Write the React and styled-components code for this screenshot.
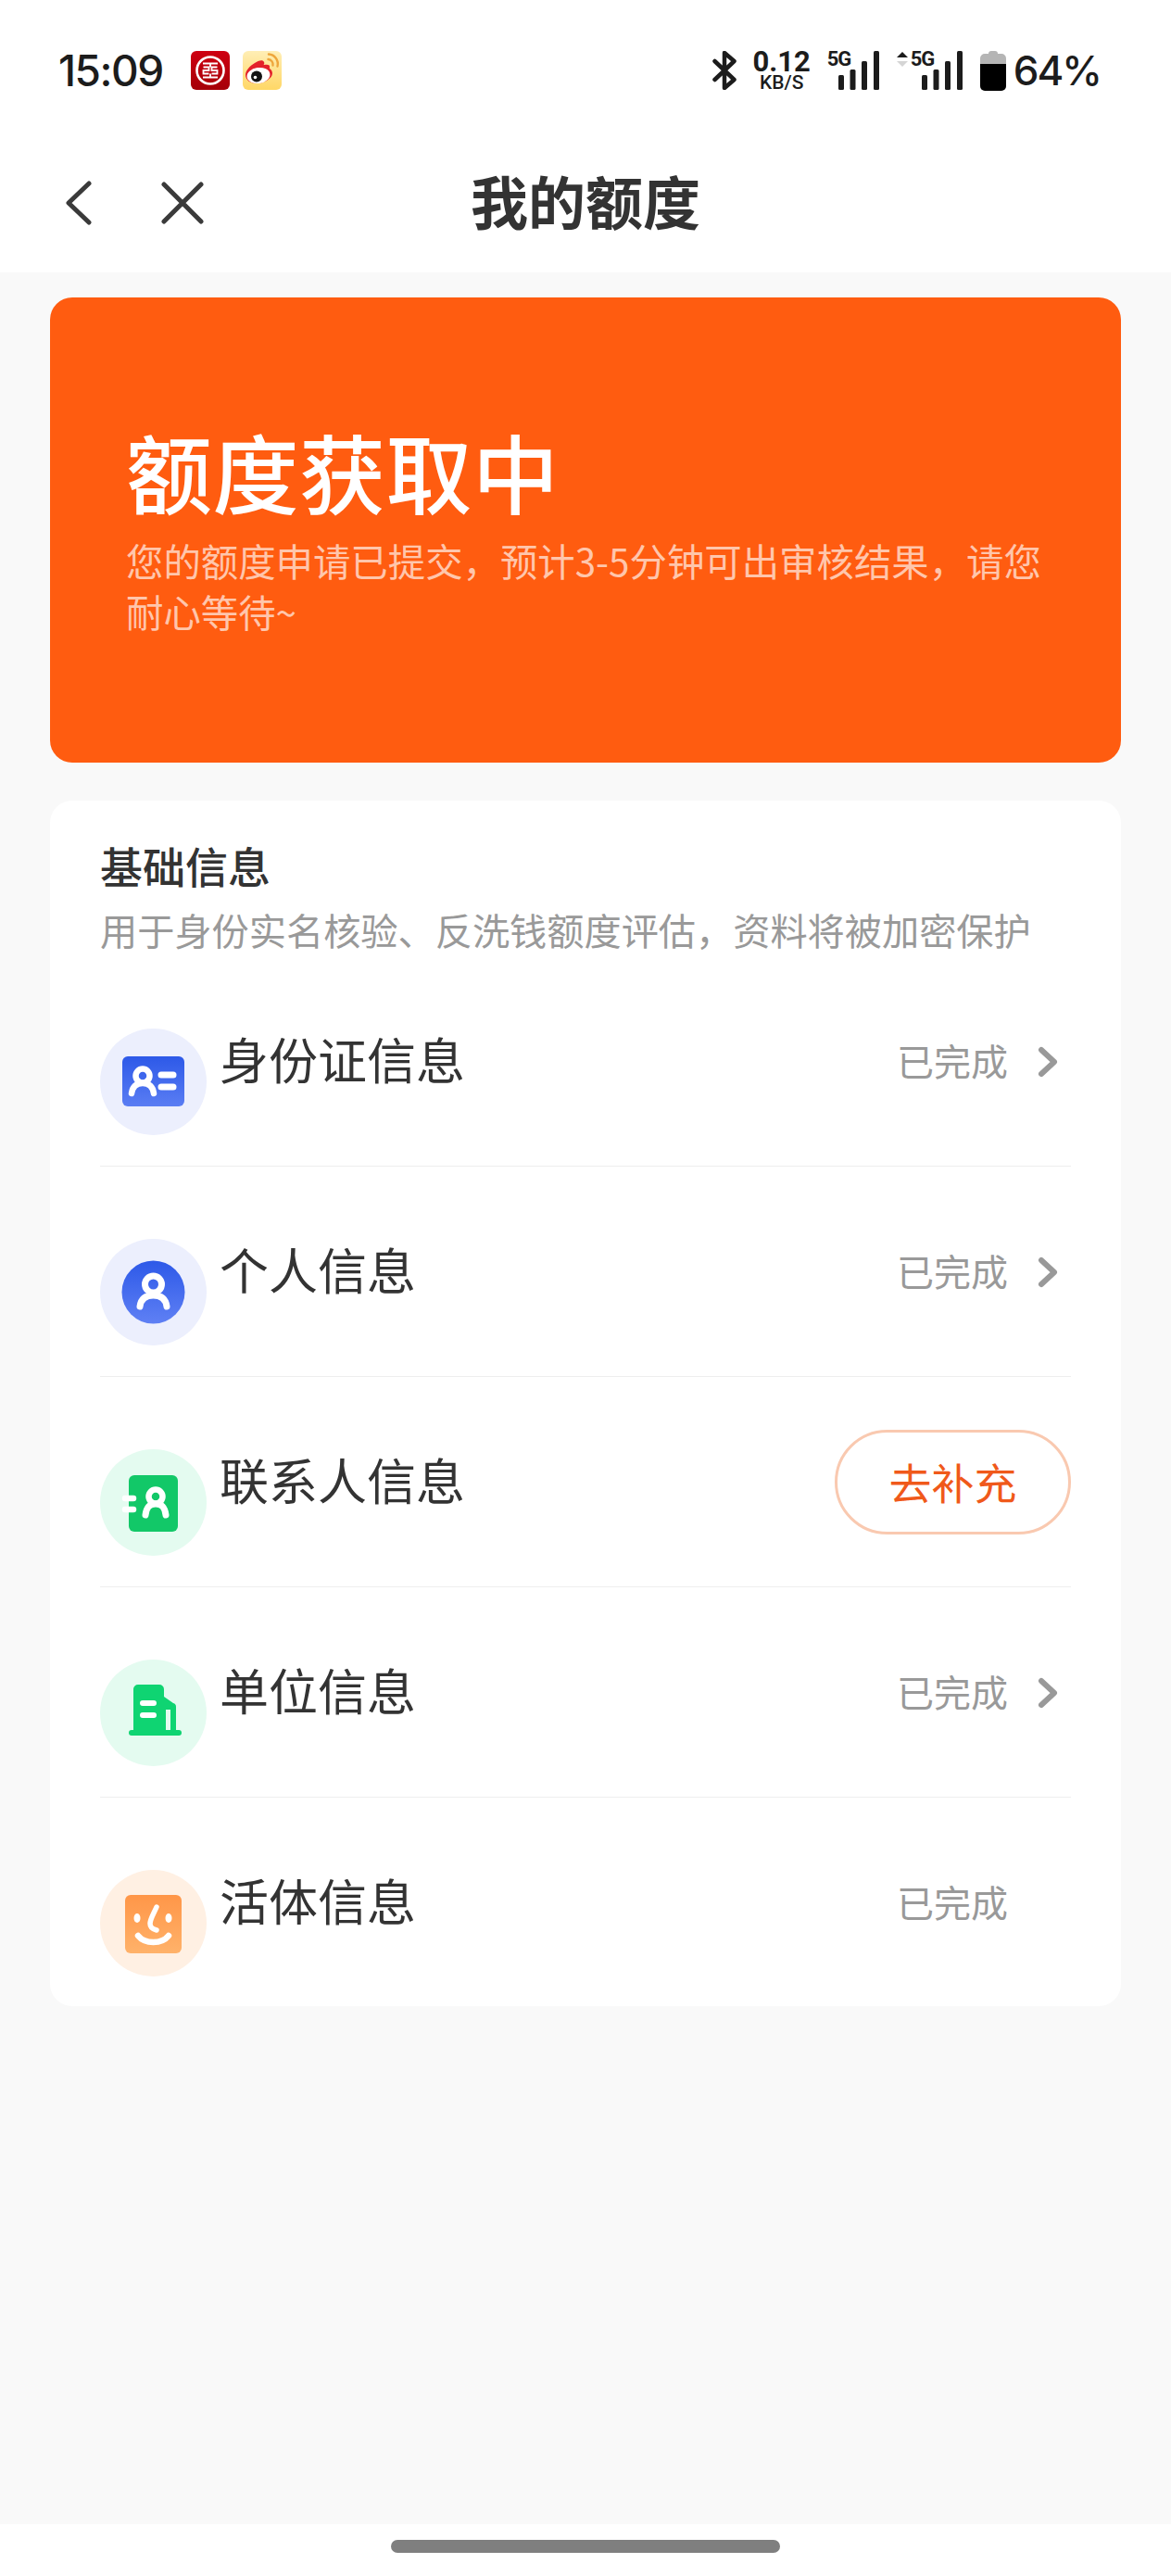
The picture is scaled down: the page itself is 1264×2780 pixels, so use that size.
import React from 'react';
import styled, { createGlobalStyle } from 'styled-components';

const GlobalStyle = createGlobalStyle`
  html, body {
    margin: 0;
    padding: 0;
    background: #fff;
  }
  * {
    box-sizing: border-box;
  }
`;

const cjk = `"Noto Sans CJK SC", "Noto Sans", sans-serif`;

const Page = styled.div`
  width: 1264px;
  height: 2780px;
  display: flex;
  flex-direction: column;
  background: #f9f9f9;
  font-family: ${cjk};
  overflow: hidden;
`;

const StatusBar = styled.div`
  height: 152px;
  flex: none;
  display: flex;
  align-items: center;
  justify-content: space-between;
  padding: 0 76px 0 63px;
  background: #fff;
  color: #1c1c1c;
`;

const StatusGroup = styled.div`
  display: flex;
  align-items: center;
  gap: ${p => p.$gap}px;
`;

const StatusText = styled.span`
  font-family: Inter, Roboto, sans-serif;
  font-size: 46px;
  font-weight: 500;
  line-height: 46px;
  letter-spacing: -1.5px;
`;

const Clock = styled(StatusText)`
  margin-right: 16px;
`;

const Percent = styled(StatusText)`
  margin-left: -11px;
  font-size: 44px;
  letter-spacing: -2px;
`;

const NetSpeed = styled.div`
  width: 60px;
  display: flex;
  flex-direction: column;
  align-items: center;
  font-family: Roboto, sans-serif;
`;

const SpeedValue = styled.span`
  font-size: 31px;
  font-weight: 700;
  line-height: 26px;
`;

const SpeedUnit = styled.span`
  font-size: 21px;
  font-weight: 500;
  line-height: 18px;
`;

const Signal = styled.div`
  position: relative;
  width: ${p => p.$width}px;
  height: 42px;
  display: flex;
  justify-content: flex-end;
`;

const NetworkTag = styled.span`
  position: absolute;
  right: 29px;
  top: -1px;
  width: 27px;
  font-family: "Liberation Sans Narrow", Roboto, sans-serif;
  font-size: 22px;
  font-weight: 700;
  line-height: 20px;
  letter-spacing: -1px;
  white-space: nowrap;
`;

const NavBar = styled.div`
  height: 142px;
  flex: none;
  position: relative;
  display: flex;
  align-items: center;
  justify-content: center;
  background: #fff;
`;

const NavButtons = styled.div`
  position: absolute;
  left: 70px;
  top: 43px;
  display: flex;
  gap: 74px;
  align-items: center;
`;

const NavTitle = styled.h1`
  margin: 0 0 14px;
  font-size: 62px;
  line-height: 80px;
  font-weight: 700;
  color: #333;
`;

const Main = styled.main`
  flex: 1;
  padding: 27px 54px 0;
`;

const Hero = styled.section`
  height: 502px;
  padding: 127px 82px 0;
  border-radius: 24px;
  background: #ff5c10;
  color: #fff;
`;

const HeroTitle = styled.h2`
  margin: 0 0 9px;
  font-size: 93px;
  line-height: 120px;
  font-weight: 500;
  letter-spacing: 0.5px;
`;

const HeroText = styled.p`
  margin: 0;
  font-size: 40.4px;
  line-height: 55px;
  color: rgba(255, 255, 255, 0.66);
`;

const Card = styled.section`
  margin-top: 41px;
  height: 1301px;
  padding: 0 54px;
  border-radius: 24px;
  background: #fff;
`;

const CardHead = styled.header`
  height: 168px;
  padding-top: 39px;
`;

const CardTitle = styled.h3`
  margin: 0;
  font-size: 46px;
  line-height: 60px;
  font-weight: 500;
  color: #333;
`;

const CardText = styled.p`
  margin: 12px 0 0;
  font-size: 40.2px;
  line-height: 56px;
  color: #999;
  white-space: nowrap;
`;

const Row = styled.div`
  height: 227px;
  padding-top: 57px;
  display: flex;
  align-items: flex-start;
  border-bottom: ${p => (p.$last ? 'none' : '1px solid #eeeeee')};
`;

const Badge = styled.svg`
  width: 115px;
  height: 115px;
  margin-top: 21px;
  flex: none;
`;

const Label = styled.span`
  flex: 1;
  margin: -3px 0 0 14px;
  font-size: 53px;
  line-height: 113px;
  color: #333;
`;

const Done = styled.span`
  margin-top: -1px;
  font-size: 40px;
  line-height: 113px;
  color: #999;
`;

const ChevronSlot = styled.span`
  width: 68px;
  height: 113px;
  padding-right: 13px;
  display: flex;
  align-items: center;
  justify-content: flex-end;
`;

const FillButton = styled.button`
  width: 255px;
  height: 113px;
  padding: 0 0 4px;
  border: 3px solid #f9c9b0;
  border-radius: 57px;
  background: #fff;
  font-family: ${cjk};
  font-size: 46px;
  color: #f0591a;
`;

const HomeArea = styled.div`
  height: 56px;
  flex: none;
  padding-top: 17px;
  display: flex;
  justify-content: center;
  background: #fff;
`;

const HomeBar = styled.div`
  width: 420px;
  height: 14px;
  border-radius: 7px;
  background: #7f7f7f;
`;

const Icbc = () => (
  <svg width="42" height="42" viewBox="0 0 42 42">
    <defs>
      <linearGradient id="icbc" x1="0" y1="0" x2="0" y2="1">
        <stop offset="0" stopColor="#cf0011" />
        <stop offset="1" stopColor="#a50008" />
      </linearGradient>
    </defs>
    <rect width="42" height="42" rx="6" fill="url(#icbc)" />
    <circle cx="21" cy="21" r="14.5" fill="none" stroke="#fff" strokeWidth="2.6" />
    <path
      d="M13 13.500h16M13 28.500h16M21 13.500v4M21 24.500v4M13.500 17.500h6v3.500h-6v3.500h6M28.500 17.500h-6v3.500h6v3.500h-6"
      fill="none"
      stroke="#fff"
      strokeWidth="1.800"
    />
  </svg>
);

const Weibo = () => (
  <svg width="42" height="42" viewBox="0 0 42 42">
    <defs>
      <linearGradient id="weibo" x1="0" y1="0" x2="0" y2="1">
        <stop offset="0" stopColor="#ffeeb5" />
        <stop offset="1" stopColor="#ffd766" />
      </linearGradient>
    </defs>
    <rect width="42" height="42" rx="6" fill="url(#weibo)" />
    <path d="M28 3.500a10.500 10.500 0 0 1 9.500 13" fill="none" stroke="#eea63c" strokeWidth="2.400" strokeLinecap="round" />
    <path d="M27.500 9a5.500 5.500 0 0 1 5 6.500" fill="none" stroke="#eea63c" strokeWidth="2.400" strokeLinecap="round" />
    <path
      d="M3 26c0-5 5-10 10-13 4-3 9-4 10-1 1 2-1 3 0 3 4-1 7 0 6 3-1 1 3 2 3 6 0 6-9 11-17 11-7 0-12-4-12-9z"
      fill="#e3212b"
    />
    <ellipse cx="17" cy="26.500" rx="12.500" ry="8.500" transform="rotate(-8 17 26.500)" fill="#fff" />
    <circle cx="15" cy="27.500" r="6" fill="#141414" />
    <circle cx="13.500" cy="28.500" r="1.800" fill="#fff" />
  </svg>
);

const Bluetooth = () => (
  <svg width="26" height="42" viewBox="0 0 26 42">
    <path
      d="M2.500 11l21 20-10.500 9V2l10.500 9-21 20"
      fill="none"
      stroke="#1c1c1c"
      strokeWidth="4.500"
      strokeLinejoin="round"
      strokeLinecap="round"
    />
  </svg>
);

const Bars = () => (
  <svg width="44" height="42" viewBox="0 0 44 42">
    <rect x="0" y="26" width="6" height="16" rx="1.500" fill="#1c1c1c" />
    <rect x="12.500" y="20" width="6" height="22" rx="1.500" fill="#1c1c1c" />
    <rect x="25" y="11" width="6" height="31" rx="1.500" fill="#1c1c1c" />
    <rect x="38" y="0" width="6" height="42" rx="1.500" fill="#1c1c1c" />
  </svg>
);

const DataArrows = styled.svg`
  position: absolute;
  left: 0;
  top: 0;
`;

const Battery = () => (
  <svg width="28" height="44" viewBox="0 0 28 44">
    <path d="M0 9a5 5 0 0 1 5-5h4a3 3 0 0 1 3-3h4a3 3 0 0 1 3 3h4a5 5 0 0 1 5 5v6H0z" fill="#b5b5b5" />
    <path d="M0 15h28v24a5 5 0 0 1-5 5H5a5 5 0 0 1-5-5z" fill="#000" />
  </svg>
);

const BackIcon = () => (
  <svg width="30" height="48" viewBox="0 0 30 48">
    <path d="M26 3L4 24l22 21" fill="none" stroke="#3a3a3a" strokeWidth="5" strokeLinecap="round" strokeLinejoin="round" />
  </svg>
);

const CloseIcon = () => (
  <svg width="46" height="46" viewBox="0 0 46 46">
    <path d="M3 3l40 40M43 3L3 43" fill="none" stroke="#3a3a3a" strokeWidth="5" strokeLinecap="round" />
  </svg>
);

const Chevron = () => (
  <svg width="24" height="34" viewBox="0 0 24 34">
    <path d="M5 4l14 13L5 30" fill="none" stroke="#999" strokeWidth="6" strokeLinecap="round" strokeLinejoin="round" />
  </svg>
);

const IdBadge = () => (
  <Badge viewBox="0 0 115 115">
    <defs>
      <linearGradient id="blueA" x1="0" y1="0" x2="0" y2="1">
        <stop offset="0" stopColor="#2d59e8" />
        <stop offset="1" stopColor="#5a7df3" />
      </linearGradient>
    </defs>
    <circle cx="57.5" cy="57.5" r="57.5" fill="#eceffd" />
    <rect x="24" y="30" width="67" height="54" rx="6" fill="url(#blueA)" />
    <circle cx="46" cy="51" r="7.500" fill="none" stroke="#fff" strokeWidth="6.500" />
    <path d="M34 70c1-7 5-11 12-11s11 4 12 11" fill="none" stroke="#fff" strokeWidth="6.500" strokeLinecap="round" />
    <path d="M66 50h13M66 63h13" fill="none" stroke="#fff" strokeWidth="7" strokeLinecap="round" />
  </Badge>
);

const PersonBadge = () => (
  <Badge viewBox="0 0 115 115">
    <defs>
      <linearGradient id="blueB" x1="0" y1="0" x2="0" y2="1">
        <stop offset="0" stopColor="#2d59e8" />
        <stop offset="1" stopColor="#5f80f4" />
      </linearGradient>
    </defs>
    <circle cx="57.5" cy="57.5" r="57.5" fill="#eceffd" />
    <circle cx="57.5" cy="57.500" r="34" fill="url(#blueB)" />
    <circle cx="57.5" cy="49" r="9" fill="none" stroke="#fff" strokeWidth="7" />
    <path d="M43 73c1-8 6-12 14.500-12S71 65 72 73" fill="none" stroke="#fff" strokeWidth="7" strokeLinecap="round" />
  </Badge>
);

const ContactBadge = () => (
  <Badge viewBox="0 0 115 115">
    <circle cx="57.5" cy="57.5" r="57.5" fill="#e4fbf0" />
    <rect x="31" y="28" width="53" height="61" rx="6" fill="#12c868" />
    <path d="M27 53h9M27 65h9" fill="none" stroke="#fff" strokeWidth="6.500" strokeLinecap="round" />
    <circle cx="60" cy="51" r="7.500" fill="none" stroke="#fff" strokeWidth="6.500" />
    <path d="M49 71c1-8 4-12 11-12s10 4 11 12" fill="none" stroke="#fff" strokeWidth="7" strokeLinecap="round" />
  </Badge>
);

const CompanyBadge = () => (
  <Badge viewBox="0 0 115 115">
    <circle cx="57.5" cy="57.5" r="57.5" fill="#e4fbf0" />
    <path d="M36 32a5 5 0 0 1 5-5h23a5 5 0 0 1 5 5v8l10 7a4 4 0 0 1 3 4v27H36z" fill="#0fd472" />
    <rect x="31" y="76" width="57" height="6" rx="3" fill="#0fd472" />
    <path d="M46 47h12M46 60h12" fill="none" stroke="#fff" strokeWidth="6" strokeLinecap="round" />
    <rect x="71" y="54" width="5" height="22" fill="#e4fbf0" />
  </Badge>
);

const FaceBadge = () => (
  <Badge viewBox="0 0 115 115">
    <defs>
      <linearGradient id="faceFill" x1="0" y1="0" x2="0" y2="1">
        <stop offset="0" stopColor="#ff9648" />
        <stop offset="1" stopColor="#ffb26a" />
      </linearGradient>
    </defs>
    <circle cx="57.5" cy="57.5" r="57.5" fill="#fff0e3" />
    <rect x="27" y="27" width="61" height="63" rx="6" fill="url(#faceFill)" />
    <ellipse cx="40" cy="52" rx="3.500" ry="5" fill="#fff" />
    <ellipse cx="74" cy="52" rx="3.500" ry="5" fill="#fff" />
    <path d="M61 40c-3 7-7 13-7 18 0 4 3 6 7 7" fill="none" stroke="#fff" strokeWidth="5.500" strokeLinecap="round" />
    <path d="M41 71c4 5 10 7 16.500 7S70 76 74 71" fill="none" stroke="#fff" strokeWidth="6.500" strokeLinecap="round" />
  </Badge>
);

const rows = [
  { label: '身份证信息', badge: IdBadge, chevron: true },
  { label: '个人信息', badge: PersonBadge, chevron: true },
  { label: '联系人信息', badge: ContactBadge, action: '去补充' },
  { label: '单位信息', badge: CompanyBadge, chevron: true },
  { label: '活体信息', badge: FaceBadge },
];

const App = () => (
  <Page>
    <GlobalStyle />

    <StatusBar>
      <StatusGroup $gap={14}>
        <Clock>15:09</Clock>
        <Icbc />
        <Weibo />
      </StatusGroup>
      <StatusGroup $gap={19}>
        <Bluetooth />
        <NetSpeed>
          <SpeedValue>0.12</SpeedValue>
          <SpeedUnit>KB/S</SpeedUnit>
        </NetSpeed>
        <Signal $width={56}>
          <NetworkTag>5G</NetworkTag>
          <Bars />
        </Signal>
        <Signal $width={71}>
          <DataArrows width="12" height="18" viewBox="0 0 12 18">
            <path d="M0 7l6-6 6 6z" fill="#1c1c1c" />
            <path d="M0 11l6 6 6-6z" fill="#d5d5d5" />
          </DataArrows>
          <NetworkTag>5G</NetworkTag>
          <Bars />
        </Signal>
        <Battery />
        <Percent>64%</Percent>
      </StatusGroup>
    </StatusBar>

    <NavBar>
      <NavButtons>
        <BackIcon />
        <CloseIcon />
      </NavButtons>
      <NavTitle>我的额度</NavTitle>
    </NavBar>

    <Main>
      <Hero>
        <HeroTitle>额度获取中</HeroTitle>
        <HeroText>您的额度申请已提交，预计3-5分钟可出审核结果，请您耐心等待~</HeroText>
      </Hero>

      <Card>
        <CardHead>
          <CardTitle>基础信息</CardTitle>
          <CardText>用于身份实名核验、反洗钱额度评估，资料将被加密保护</CardText>
        </CardHead>
        {rows.map(({ label, badge: RowBadge, chevron, action }, i) => (
          <Row key={label} $last={i === rows.length - 1}>
            <RowBadge />
            <Label>{label}</Label>
            {action ? (
              <FillButton>{action}</FillButton>
            ) : (
              <>
                <Done>已完成</Done>
                <ChevronSlot>{chevron && <Chevron />}</ChevronSlot>
              </>
            )}
          </Row>
        ))}
      </Card>
    </Main>

    <HomeArea>
      <HomeBar />
    </HomeArea>
  </Page>
);

export default App;
